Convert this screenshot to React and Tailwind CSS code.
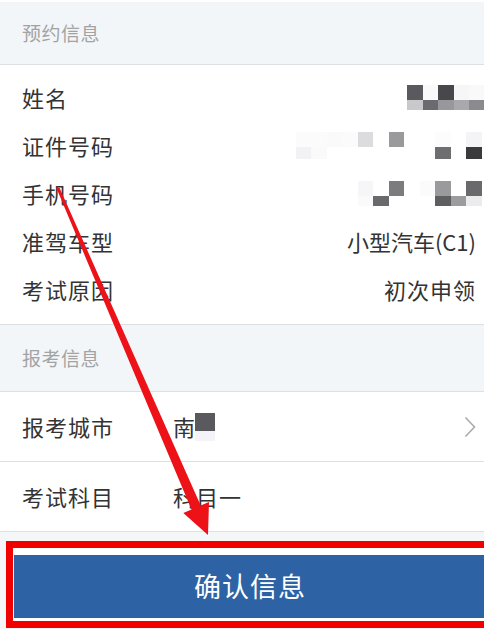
import React from 'react'

const nameMosaic = [
  { h: 'h-[15px]', cells: ['bg-[#5a5a5e]', 'bg-[#f9f9f9]', 'bg-[#48484c]', 'bg-[#f6f6f7]', 'bg-[#f9f9f9]'] },
  { h: 'h-[10px]', cells: ['bg-[#c9c9cd]', 'bg-[#6b6b6f]', 'bg-[#98989c]', 'bg-[#a9a9ad]', 'bg-[#8b8b8f]'] },
]

const idMosaic = [
  {
    h: 'h-[15px]',
    cells: ['bg-[#fbfbfb]', 'bg-[#fbfbfb]', 'bg-[#fafafa]', 'bg-[#fbfbfb]', 'bg-[#dcdcde]', 'bg-white', 'bg-[#9a9a9c]', 'bg-white', 'bg-white', 'bg-[#fcfcfc]', 'bg-white', 'bg-[#f4f4f6]'],
  },
  {
    h: 'h-[12px]',
    cells: ['bg-[#f2f2f4]', 'bg-[#fafafa]', 'bg-white', 'bg-white', 'bg-white', 'bg-white', 'bg-white', 'bg-white', 'bg-white', 'bg-[#6e6e70]', 'bg-white', 'bg-[#3a3a3c]'],
  },
]

const phoneMosaic = [
  { h: 'h-[15px]', cells: ['bg-[#f6f6f8]', 'bg-white', 'bg-[#7c7c7e]', 'bg-white', 'bg-[#fbfbfb]', 'bg-[#9a9a9c]', 'bg-white', 'bg-[#6a6a6c]'] },
  { h: 'h-[10px]', cells: ['bg-[#fafafa]', 'bg-[#6a6a6c]', 'bg-white', 'bg-white', 'bg-white', 'bg-[#5e5e60]', 'bg-[#9c9c9e]', 'bg-[#ececee]'] },
]

function Mosaic({ rows, className }) {
  return (
    <div className={'flex flex-col ' + className}>
      {rows.map((r, i) => (
        <div key={i} className={'flex ' + r.h}>
          {r.cells.map((c, j) => (
            <div key={j} className={'w-[15.5px] shrink-0 ' + c} />
          ))}
        </div>
      ))}
    </div>
  )
}

function InfoRow({ label, children }) {
  return (
    <div className="flex items-center justify-between h-[48px] pl-[22px] pr-[8px]">
      <span className="tracking-[1px]">{label}</span>
      {children}
    </div>
  )
}

export default function App() {
  return (
    <div className="relative w-[484px] h-[629px] overflow-hidden bg-[#f4f6f8] text-[#333] font-['Noto_Sans_CJK_SC',sans-serif]">
      <div className="h-[2px] bg-white" />

      <div className="h-[63px] flex items-center pl-[22px] bg-[#f2f6f9] border-b border-[#dce0e3] text-[19px] text-[#a3a3a3] tracking-[0.5px]">
        预约信息
      </div>

      <div className="bg-white pt-[8px] pb-[11px] text-[22px] border-b border-[#dce0e3]">
        <InfoRow label="姓名">
          <Mosaic rows={nameMosaic} className="mr-[-8.5px]" />
        </InfoRow>
        <InfoRow label="证件号码">
          <Mosaic rows={idMosaic} className="mr-[-5.5px]" />
        </InfoRow>
        <InfoRow label="手机号码">
          <Mosaic rows={phoneMosaic} className="mr-[-5.5px]" />
        </InfoRow>
        <InfoRow label="准驾车型">
          <span>小型汽车(C1)</span>
        </InfoRow>
        <InfoRow label="考试原因">
          <span className="tracking-[1px]">初次申领</span>
        </InfoRow>
      </div>

      <div className="h-[67px] flex items-center pl-[22px] bg-[#f2f6f9] border-b border-[#dce0e3] text-[19px] text-[#a3a3a3] tracking-[0.5px]">
        报考信息
      </div>

      <div className="bg-white text-[22px]">
        <div className="flex items-center h-[70px] pl-[22px] pr-[8px] border-b border-[#dce0e3]">
          <span className="w-[151px] tracking-[1px]">报考城市</span>
          <span className="flex items-start">
            南
            <span className="flex flex-col mt-[3px]">
              <span className="block w-[20px] h-[18px] bg-[#5a5a5e]" />
              <span className="block w-[20px] h-[10px] bg-[#f4f4f8]" />
            </span>
          </span>
          <svg className="ml-auto" width="12" height="22" viewBox="0 0 12 22" fill="none">
            <path d="M1.5 1.5 L10.5 11 L1.5 20.5" stroke="#ababab" strokeWidth="1.6" />
          </svg>
        </div>
        <div className="flex items-center h-[70px] pl-[22px] pr-[8px] border-b border-[#dce0e3]">
          <span className="w-[151px] tracking-[1px]">考试科目</span>
          <span className="tracking-[1px]">科目一</span>
        </div>
      </div>

      <div className="flex pt-[9px] pl-[6px] overflow-hidden">
        <div className="w-[540px] shrink-0 border-[7px] border-[#f20000] bg-white pt-[7px] pb-[3px] pl-[1px]">
          <div className="h-[63px] flex items-center pl-[180px] bg-[#2d63a5] text-white text-[27px] tracking-[1px]">
            确认信息
          </div>
        </div>
      </div>

      <svg className="absolute inset-0 pointer-events-none" width="484" height="629" viewBox="0 0 484 629">
        <polygon
          fill="#ec1218"
          points="56.6,188.6 59.4,187.4 200.7,505.5 209,502 208,535 183.3,513 191.5,509.5"
        />
      </svg>
    </div>
  )
}
